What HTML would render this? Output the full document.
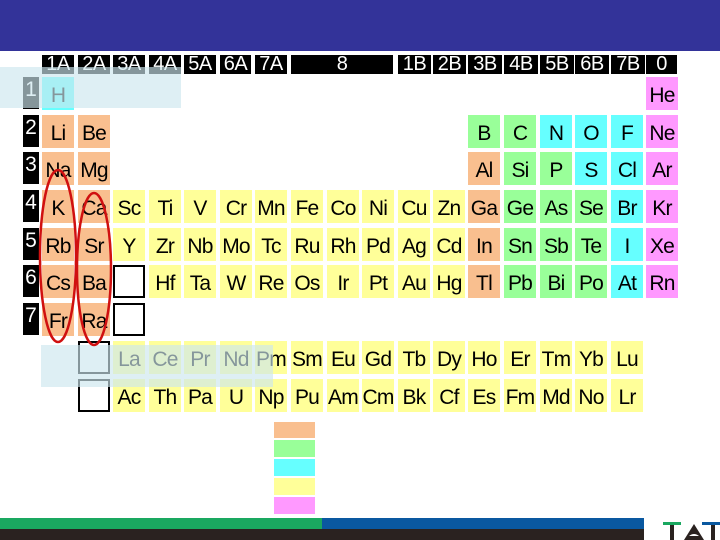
<!DOCTYPE html>
<html><head><meta charset="utf-8"><style>
*{margin:0;padding:0;box-sizing:border-box}
body{width:720px;height:540px;position:relative;overflow:hidden;background:#fff;font-family:"Liberation Sans",Arial,sans-serif}
.b{position:absolute}
.h{position:absolute;top:55px;height:19px;background:#000;color:#fff;font-size:20px;line-height:19px;text-align:center;overflow:hidden;letter-spacing:-0.5px}
.p{position:absolute;left:23px;width:16px;height:32px;background:#000;color:#fff;font-size:21px;line-height:26px;text-align:center}
.c{position:absolute;width:32px;height:33px;font-size:21px;line-height:38px;text-align:center;color:#000;letter-spacing:-0.8px;white-space:nowrap}
.o{background:#f9bf8f}.y{background:#ffff99}.g{background:#99ff99}.q{background:#66ffff}.k{background:#ff99ff}
.e{position:absolute;width:32px;height:33px;border:2px solid #000;background:#fff}
</style></head><body>
<div class="b" style="left:0;top:0;width:720px;height:51px;background:#333399"></div>
<div class="h" style="left:42px;width:32px">1A</div>
<div class="h" style="left:78px;width:32px">2A</div>
<div class="h" style="left:113px;width:32px">3A</div>
<div class="h" style="left:149px;width:32px">4A</div>
<div class="h" style="left:184px;width:32px">5A</div>
<div class="h" style="left:220px;width:31px">6A</div>
<div class="h" style="left:255px;width:32px">7A</div>
<div class="h" style="left:291px;width:102px">8</div>
<div class="h" style="left:398px;width:33px">1B</div>
<div class="h" style="left:433px;width:33px">2B</div>
<div class="h" style="left:468px;width:34px">3B</div>
<div class="h" style="left:504px;width:34px">4B</div>
<div class="h" style="left:540px;width:34px">5B</div>
<div class="h" style="left:575px;width:34px">6B</div>
<div class="h" style="left:611px;width:34px">7B</div>
<div class="h" style="left:646px;width:31px">0</div>

<div class="p" style="top:77px">1</div><div class="p" style="top:115px">2</div><div class="p" style="top:152px">3</div><div class="p" style="top:190px">4</div><div class="p" style="top:228px">5</div><div class="p" style="top:265px">6</div><div class="p" style="top:303px">7</div>

<div class="c q" style="left:42px;top:77px">H</div>
<div class="c k" style="left:646px;top:77px">He</div>
<div class="c o" style="left:42px;top:115px">Li</div><div class="c o" style="left:78px;top:115px">Be</div>
<div class="c g" style="left:468px;top:115px">B</div><div class="c g" style="left:504px;top:115px">C</div><div class="c q" style="left:540px;top:115px">N</div><div class="c q" style="left:575px;top:115px">O</div><div class="c q" style="left:611px;top:115px">F</div><div class="c k" style="left:646px;top:115px">Ne</div>
<div class="c o" style="left:42px;top:152px">Na</div><div class="c o" style="left:78px;top:152px">Mg</div>
<div class="c o" style="left:468px;top:152px">Al</div><div class="c g" style="left:504px;top:152px">Si</div><div class="c g" style="left:540px;top:152px">P</div><div class="c q" style="left:575px;top:152px">S</div><div class="c q" style="left:611px;top:152px">Cl</div><div class="c k" style="left:646px;top:152px">Ar</div>
<div class="c o" style="left:42px;top:190px">K</div><div class="c o" style="left:78px;top:190px">Ca</div>
<div class="c y" style="left:113px;top:190px">Sc</div><div class="c y" style="left:149px;top:190px">Ti</div><div class="c y" style="left:184px;top:190px">V</div><div class="c y" style="left:220px;top:190px">Cr</div><div class="c y" style="left:255px;top:190px">Mn</div><div class="c y" style="left:291px;top:190px">Fe</div><div class="c y" style="left:327px;top:190px">Co</div><div class="c y" style="left:362px;top:190px">Ni</div><div class="c y" style="left:398px;top:190px">Cu</div><div class="c y" style="left:433px;top:190px">Zn</div>
<div class="c o" style="left:468px;top:190px">Ga</div><div class="c g" style="left:504px;top:190px">Ge</div><div class="c g" style="left:540px;top:190px">As</div><div class="c g" style="left:575px;top:190px">Se</div><div class="c q" style="left:611px;top:190px">Br</div><div class="c k" style="left:646px;top:190px">Kr</div>
<div class="c o" style="left:42px;top:228px">Rb</div><div class="c o" style="left:78px;top:228px">Sr</div>
<div class="c y" style="left:113px;top:228px">Y</div><div class="c y" style="left:149px;top:228px">Zr</div><div class="c y" style="left:184px;top:228px">Nb</div><div class="c y" style="left:220px;top:228px">Mo</div><div class="c y" style="left:255px;top:228px">Tc</div><div class="c y" style="left:291px;top:228px">Ru</div><div class="c y" style="left:327px;top:228px">Rh</div><div class="c y" style="left:362px;top:228px">Pd</div><div class="c y" style="left:398px;top:228px">Ag</div><div class="c y" style="left:433px;top:228px">Cd</div>
<div class="c o" style="left:468px;top:228px">In</div><div class="c g" style="left:504px;top:228px">Sn</div><div class="c g" style="left:540px;top:228px">Sb</div><div class="c g" style="left:575px;top:228px">Te</div><div class="c q" style="left:611px;top:228px">I</div><div class="c k" style="left:646px;top:228px">Xe</div>
<div class="c o" style="left:42px;top:265px">Cs</div><div class="c o" style="left:78px;top:265px">Ba</div>
<div class="e" style="left:113px;top:265px"></div>
<div class="c y" style="left:149px;top:265px">Hf</div><div class="c y" style="left:184px;top:265px">Ta</div><div class="c y" style="left:220px;top:265px">W</div><div class="c y" style="left:255px;top:265px">Re</div><div class="c y" style="left:291px;top:265px">Os</div><div class="c y" style="left:327px;top:265px">Ir</div><div class="c y" style="left:362px;top:265px">Pt</div><div class="c y" style="left:398px;top:265px">Au</div><div class="c y" style="left:433px;top:265px">Hg</div>
<div class="c o" style="left:468px;top:265px">Tl</div><div class="c g" style="left:504px;top:265px">Pb</div><div class="c g" style="left:540px;top:265px">Bi</div><div class="c g" style="left:575px;top:265px">Po</div><div class="c q" style="left:611px;top:265px">At</div><div class="c k" style="left:646px;top:265px">Rn</div>
<div class="c o" style="left:42px;top:303px">Fr</div><div class="c o" style="left:78px;top:303px">Ra</div>
<div class="e" style="left:113px;top:303px"></div>
<div class="e" style="left:78px;top:341px"></div>
<div class="c y" style="left:113px;top:341px">La</div><div class="c y" style="left:149px;top:341px">Ce</div><div class="c y" style="left:184px;top:341px">Pr</div><div class="c y" style="left:220px;top:341px">Nd</div><div class="c y" style="left:255px;top:341px">Pm</div><div class="c y" style="left:291px;top:341px">Sm</div><div class="c y" style="left:327px;top:341px">Eu</div><div class="c y" style="left:362px;top:341px">Gd</div><div class="c y" style="left:398px;top:341px">Tb</div><div class="c y" style="left:433px;top:341px">Dy</div><div class="c y" style="left:468px;top:341px">Ho</div><div class="c y" style="left:504px;top:341px">Er</div><div class="c y" style="left:540px;top:341px">Tm</div><div class="c y" style="left:575px;top:341px">Yb</div><div class="c y" style="left:611px;top:341px">Lu</div>
<div class="e" style="left:78px;top:379px"></div>
<div class="c y" style="left:113px;top:379px">Ac</div><div class="c y" style="left:149px;top:379px">Th</div><div class="c y" style="left:184px;top:379px">Pa</div><div class="c y" style="left:220px;top:379px">U</div><div class="c y" style="left:255px;top:379px">Np</div><div class="c y" style="left:291px;top:379px">Pu</div><div class="c y" style="left:327px;top:379px">Am</div><div class="c y" style="left:362px;top:379px">Cm</div><div class="c y" style="left:398px;top:379px">Bk</div><div class="c y" style="left:433px;top:379px">Cf</div><div class="c y" style="left:468px;top:379px">Es</div><div class="c y" style="left:504px;top:379px">Fm</div><div class="c y" style="left:540px;top:379px">Md</div><div class="c y" style="left:575px;top:379px">No</div><div class="c y" style="left:611px;top:379px">Lr</div>

<div class="b" style="left:0;top:67px;width:181px;height:41px;background:rgba(205,230,238,0.65)"></div>
<div class="b" style="left:41px;top:345px;width:232px;height:42px;background:rgba(205,230,238,0.65)"></div>

<svg class="b" style="left:0;top:0" width="720" height="540">
<ellipse cx="58" cy="256" rx="18" ry="86" fill="none" stroke="#d01010" stroke-width="2.5"/>
<ellipse cx="94" cy="269" rx="17" ry="76" fill="none" stroke="#d01010" stroke-width="2.5"/>
</svg>

<div class="b o" style="left:274px;top:422px;width:41px;height:16px"></div>
<div class="b g" style="left:274px;top:440px;width:41px;height:17px"></div>
<div class="b q" style="left:274px;top:459px;width:41px;height:17px"></div>
<div class="b y" style="left:274px;top:478px;width:41px;height:17px"></div>
<div class="b k" style="left:274px;top:497px;width:41px;height:17px"></div>

<div class="b" style="left:0;top:518px;width:322px;height:11px;background:#1aa860"></div>
<div class="b" style="left:322px;top:518px;width:322px;height:11px;background:#0a58a0"></div>
<div class="b" style="left:0;top:529px;width:644px;height:11px;background:#2a2220"></div>
<div class="b" style="left:663px;top:522px;width:18px;height:3px;background:#1aa860"></div>
<div class="b" style="left:702px;top:522px;width:18px;height:3px;background:#0a58a0"></div>
<div class="b" style="left:670px;top:525px;width:4px;height:15px;background:#2a2220"></div>
<svg class="b" style="left:680px;top:522px" width="40" height="18"><polygon points="14,2 4,18 24,18" fill="#2a2220"/><path d="M9,14 Q14,10 19,14" fill="#fff"/><rect x="31" y="3" width="4" height="15" fill="#2a2220"/></svg>
</body></html>
